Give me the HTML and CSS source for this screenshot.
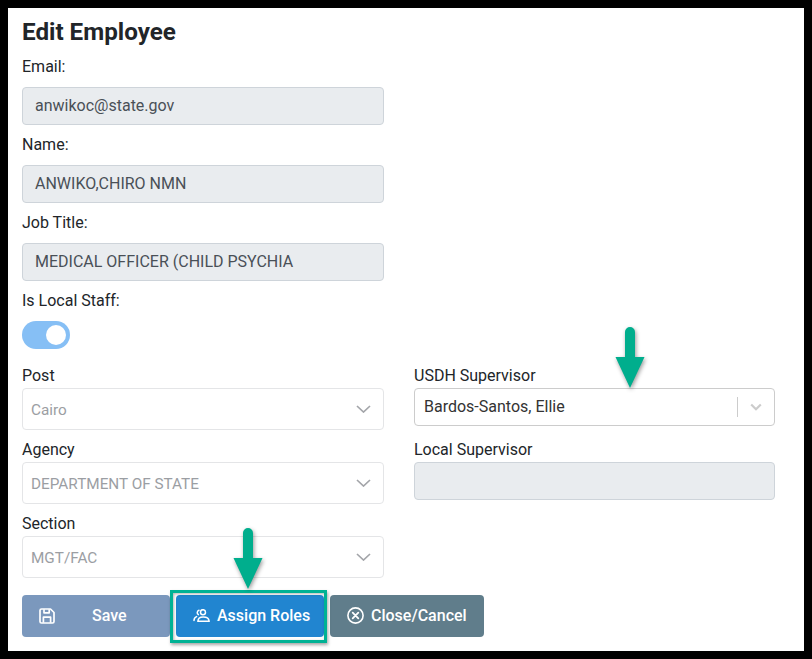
FILE: index.html
```html
<!DOCTYPE html>
<html lang="en">
<head>
<meta charset="utf-8">
<title>Edit Employee</title>
<link rel="stylesheet" href="styles.css">
</head>
<body>
<main class="frame">
  <h1 class="title">Edit Employee</h1>
  <div class="stack">
    <div class="field"><label class="label">Email:</label><div class="input">anwikoc@state.gov</div></div>
    <div class="field"><label class="label">Name:</label><div class="input">ANWIKO,CHIRO NMN</div></div>
    <div class="field"><label class="label">Job Title:</label><div class="input">MEDICAL OFFICER (CHILD PSYCHIA</div></div>
    <div class="field toggle-field"><label class="label">Is Local Staff:</label><div class="toggle"><span class="knob"></span></div></div>
  </div>
  <div class="columns">
    <div class="col">
      <div class="sfield"><div class="slabel">Post</div><div class="select"><span class="select-text">Cairo</span><svg class="chev" viewBox="0 0 15 8" width="15" height="8"><path d="M1 1l6.500 6L14 1" fill="none" stroke="#a3a5a9" stroke-width="1.7"/></svg></div></div>
      <div class="sfield"><div class="slabel">Agency</div><div class="select"><span class="select-text">DEPARTMENT OF STATE</span><svg class="chev" viewBox="0 0 15 8" width="15" height="8"><path d="M1 1l6.500 6L14 1" fill="none" stroke="#a3a5a9" stroke-width="1.7"/></svg></div></div>
      <div class="sfield"><div class="slabel">Section</div><div class="select"><span class="select-text">MGT/FAC</span><svg class="chev" viewBox="0 0 15 8" width="15" height="8"><path d="M1 1l6.500 6L14 1" fill="none" stroke="#a3a5a9" stroke-width="1.7"/></svg></div></div>
    </div>
    <div class="col">
      <div class="sfield rfield"><div class="slabel">USDH Supervisor</div>
        <div class="combo"><span class="combo-text">Bardos-Santos, Ellie</span><span class="sep"></span><svg class="combo-chev" viewBox="0 0 12 8" width="12" height="8"><path d="M1.200 1.500L6 6.200l4.800-4.700" fill="none" stroke="#ccc" stroke-width="2.200"/></svg></div>
      </div>
      <div class="sfield"><div class="slabel">Local Supervisor</div><div class="input empty"></div></div>
    </div>
  </div>
  <div class="actions">
    <button class="btn save" type="button">
      <svg viewBox="0 0 16 16" width="16" height="16" fill="none" stroke="#fff" stroke-width="1.700" stroke-linejoin="round"><path d="M2.500 1h9l3.500 3.500v9a1.500 1.500 0 0 1-1.500 1.500h-11A1.500 1.500 0 0 1 1 13.500v-11A1.500 1.500 0 0 1 2.500 1z"/><path d="M5 1.200v3.600h5.200V1.200"/><path d="M4.400 14.800V9.200h7.200v5.600"/></svg>
      <span>Save</span>
    </button>
    <button class="btn assign" type="button">
      <svg viewBox="0 0 17 13" width="17" height="13" fill="none" stroke="#fff" stroke-width="1.500" stroke-linecap="round" stroke-linejoin="round"><circle cx="10" cy="3.200" r="2.500"/><path d="M5 12.200c0-2.800 2.200-4.200 5.200-4.200s5.800 1.400 5.800 4.200"/><path d="M5 12.200h11"/><path d="M6 1.200a2.500 2.500 0 0 0-.6 4.500M3.600 7.600C2 8.200 1 9.600 1 11.400"/></svg>
      <span>Assign Roles</span>
    </button>
    <button class="btn close" type="button">
      <svg viewBox="0 0 17 17" width="17" height="17" fill="none" stroke="#fff" stroke-width="1.600" stroke-linecap="round"><circle cx="8.500" cy="8.500" r="7.600"/><path d="M5.700 5.700l5.600 5.600M11.300 5.700l-5.600 5.600" stroke-width="1.800"/></svg>
      <span>Close/Cancel</span>
    </button>
  </div>
  <div class="highlight"></div>
  <svg class="arrow arrow-top" viewBox="0 0 34 66" width="34" height="66"><path d="M17 2a5 5 0 0 1 5 5v25h9.500L17 63 2.500 32H12V7a5 5 0 0 1 5-5z" fill="#00ae8d"/></svg>
  <svg class="arrow arrow-bottom" viewBox="0 0 34 66" width="34" height="66"><path d="M17 2a5 5 0 0 1 5 5v25h9.500L17 63 2.500 32H12V7a5 5 0 0 1 5-5z" fill="#00ae8d"/></svg>
</main>
</body>
</html>
```
FILE: styles.css
```css
* { box-sizing: border-box; }
html, body { margin: 0; padding: 0; background: #000; }
body {
  width: 812px;
  height: 659px;
  overflow: hidden;
  font-family: Roboto, "Liberation Sans", sans-serif;
  font-size: 16px;
  line-height: 24px;
  color: #212529;
}
.frame {
  position: relative;
  margin: 8px;
  width: 796px;
  height: 643px;
  background: #fff;
  padding: 10px 14px 0;
}
.title {
  margin: 0 0 8px;
  font-size: 24.2px;
  font-weight: 700;
  line-height: 29px;
}
.field { margin-bottom: 8px; width: 362px; }
.toggle-field { margin-bottom: 15px; }
.label { display: block; margin-bottom: 8px; }
.input {
  height: 38px;
  width: 100%;
  padding: 6px 12px;
  background: #e9ecef;
  border: 1px solid #ced4da;
  border-radius: 4px;
  color: #495057;
}
.toggle {
  position: relative;
  width: 48px;
  height: 28px;
  border-radius: 14px;
  background: #86bff5;
}
.knob {
  position: absolute;
  top: 4px;
  left: 24px;
  width: 20px;
  height: 20px;
  border-radius: 50%;
  background: #fff;
}
.columns { display: grid; grid-template-columns: 362px 361px; column-gap: 30px; }
.sfield { margin-bottom: 8px; }
.slabel { height: 24px; }
.select {
  display: flex;
  align-items: center;
  justify-content: space-between;
  height: 42px;
  padding: 0 12px 0 8px;
  border: 1px solid #e4e5e7;
  border-radius: 4px;
  color: #9b9ea3;
  font-size: 15.3px;
}
.select-text { padding-top: 2px; }
.combo {
  display: flex;
  align-items: center;
  height: 38px;
  padding: 0 12px 0 9px;
  border: 1px solid #cccccc;
  border-radius: 4px;
  background: #fff;
}
.rfield { margin-bottom: 12px; }
.combo-text { flex: 1; color: #333; font-size: 16px; }
.sep { width: 1px; height: 20px; background: #ccc; margin-right: 12px; }
.empty { height: 38px; }
.actions { display: flex; gap: 6px; margin-top: 9px; }
.btn {
  display: flex;
  align-items: center;
  height: 42px;
  border: 0;
  border-radius: 4px;
  color: #fff;
  font-family: inherit;
  font-size: 16px;
  font-weight: 500;
  padding: 0 0 1px;
}
.save { width: 148px; background: #7b98bd; padding-left: 17px; }
.save span { margin-left: 37px; }
.assign { width: 148px; background: #2185d0; padding-left: 17px; }
.assign span { margin-left: 7px; }
.close { width: 154px; background: #607d8b; padding-left: 17px; }
.close span { margin-left: 7px; }
.arrow { position: absolute; filter: drop-shadow(1px 2px 2px rgba(0,0,0,.4)); }
.arrow-top { left: 605px; top: 317px; }
.arrow-bottom { left: 223px; top: 518px; }
.highlight {
  position: absolute;
  left: 162px;
  top: 582px;
  width: 157px;
  height: 53px;
  border: 3px solid #00b294;
  box-shadow: 1px 2px 3px rgba(0,0,0,.35), inset 1px 1px 3px rgba(0,0,0,.3);
}
```
